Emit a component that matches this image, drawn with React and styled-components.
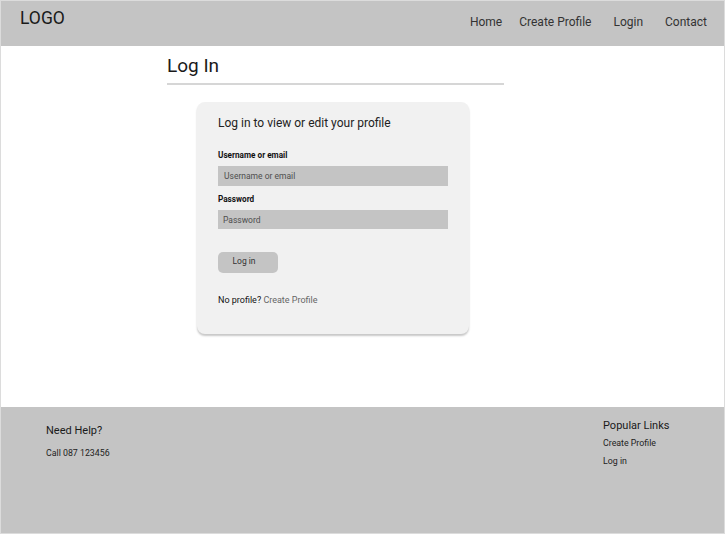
import React from "react";
import styled, { createGlobalStyle } from "styled-components";

const Global = createGlobalStyle`
  html, body { margin: 0; padding: 0; background: #fff; }
  body { font-family: Roboto, "Noto Sans", Arial, sans-serif; color: #222; }
  * { box-sizing: border-box; }
`;

const Page = styled.div`
  min-height: 534px;
  border: 1px solid #dcdcdc;
  display: flex;
  flex-direction: column;
`;

const Header = styled.header`
  height: 45px;
  background: #c4c4c4;
  display: flex;
  align-items: flex-start;
  justify-content: space-between;
  padding: 0 17px 0 19px;
`;

const Logo = styled.div`
  font-size: 17.5px;
  line-height: 20px;
  margin-top: 7px;
  color: #1a1a1a;
`;

const Nav = styled.nav`
  display: flex;
  margin-top: 13px;
`;

const NavLink = styled.a`
  font-size: 12px;
  line-height: 16px;
  color: #333;
  text-decoration: none;
  margin-left: ${(p) => p.$gap}px;
`;

const Main = styled.main`
  flex: 1;
  height: 361px;
  padding: 8px 0 0 166px;
`;

const Container = styled.div`
  width: 337px;
`;

const Title = styled.h1`
  margin: 0;
  font-size: 19px;
  font-weight: 400;
  line-height: 24px;
  color: #1a1a1a;
  padding: 0 0 5px 0;
  border-bottom: 2px solid #d6d6d6;
`;

const Card = styled.section`
  margin: 17px 0 0 30px;
  width: 272px;
  height: 232px;
  background: #f1f1f1;
  border-radius: 8px;
  box-shadow: 0 2px 2px rgba(0, 0, 0, 0.22);
  padding: 14px 21px 0 21px;
  display: flex;
  flex-direction: column;
`;

const CardHeading = styled.h2`
  margin: 0 0 19px;
  font-size: 12px;
  font-weight: 400;
  line-height: 14px;
  color: #222;
`;

const Label = styled.label`
  display: block;
  font-size: 8.2px;
  font-weight: 700;
  line-height: 10px;
  color: #111;
  margin: ${(p) => p.$top}px 0 ${(p) => p.$gap}px;
`;

const Input = styled.input`
  display: block;
  width: 230px;
  height: ${(p) => p.$h}px;
  border: none;
  outline: none;
  background: #c4c4c4;
  font-family: inherit;
  font-size: 8.5px;
  padding: 0 0 0 ${(p) => p.$pl}px;
  margin: 0 0 ${(p) => p.$mb}px;
  &::placeholder { color: #4e4e4e; }
`;

const Button = styled.button`
  width: 60px;
  height: 21px;
  border: none;
  border-radius: 5px;
  background: #c4c4c4;
  font-family: inherit;
  font-weight: 400;
  font-size: 8.5px;
  color: #333;
  padding: 0 8px 3px 0;
  margin: 0 0 21px;
`;

const Note = styled.p`
  margin: 0;
  font-size: 9px;
  line-height: 12px;
  color: #111;
`;

const Muted = styled.a`
  color: #666;
  text-decoration: none;
`;

const Footer = styled.footer`
  height: 126px;
  background: #c4c4c4;
  display: grid;
  grid-template-columns: 1fr 121px;
  padding-left: 45px;
`;

const FooterCol = styled.div`
  padding-top: ${(p) => p.$top}px;
  display: flex;
  flex-direction: column;
`;

const FooterHeading = styled.h3`
  margin: 0;
  font-size: 11px;
  font-weight: 400;
  line-height: 14px;
  color: #1a1a1a;
`;

const FooterText = styled.a`
  font-size: 8.8px;
  line-height: 12px;
  color: #222;
  text-decoration: none;
  margin-top: ${(p) => p.$mt}px;
`;

export default function App() {
  return (
    <>
      <Global />
      <Page>
        <Header>
          <Logo>LOGO</Logo>
          <Nav>
            <NavLink $gap={0}>Home</NavLink>
            <NavLink $gap={17}>Create Profile</NavLink>
            <NavLink $gap={22}>Login</NavLink>
            <NavLink $gap={22}>Contact</NavLink>
          </Nav>
        </Header>
        <Main>
          <Container>
            <Title>Log In</Title>
            <Card>
              <CardHeading>Log in to view or edit your profile</CardHeading>
              <Label $top={1} $gap={6}>Username or email</Label>
              <Input $h={20} $pl={6} $mb={8} placeholder="Username or email" />
              <Label $top={0} $gap={6}>Password</Label>
              <Input $h={19} $pl={5} $mb={20} placeholder="Password" />
              <div>
                <Button>Log in</Button>
              </div>
              <Note>
                No profile? <Muted>Create Profile</Muted>
              </Note>
            </Card>
          </Container>
        </Main>
        <Footer>
          <FooterCol $top={17}>
            <FooterHeading>Need Help?</FooterHeading>
            <FooterText $mt={9}>Call 087 123456</FooterText>
          </FooterCol>
          <FooterCol $top={12}>
            <FooterHeading>Popular Links</FooterHeading>
            <FooterText $mt={4}>Create Profile</FooterText>
            <FooterText $mt={6}>Log in</FooterText>
          </FooterCol>
        </Footer>
      </Page>
    </>
  );
}
